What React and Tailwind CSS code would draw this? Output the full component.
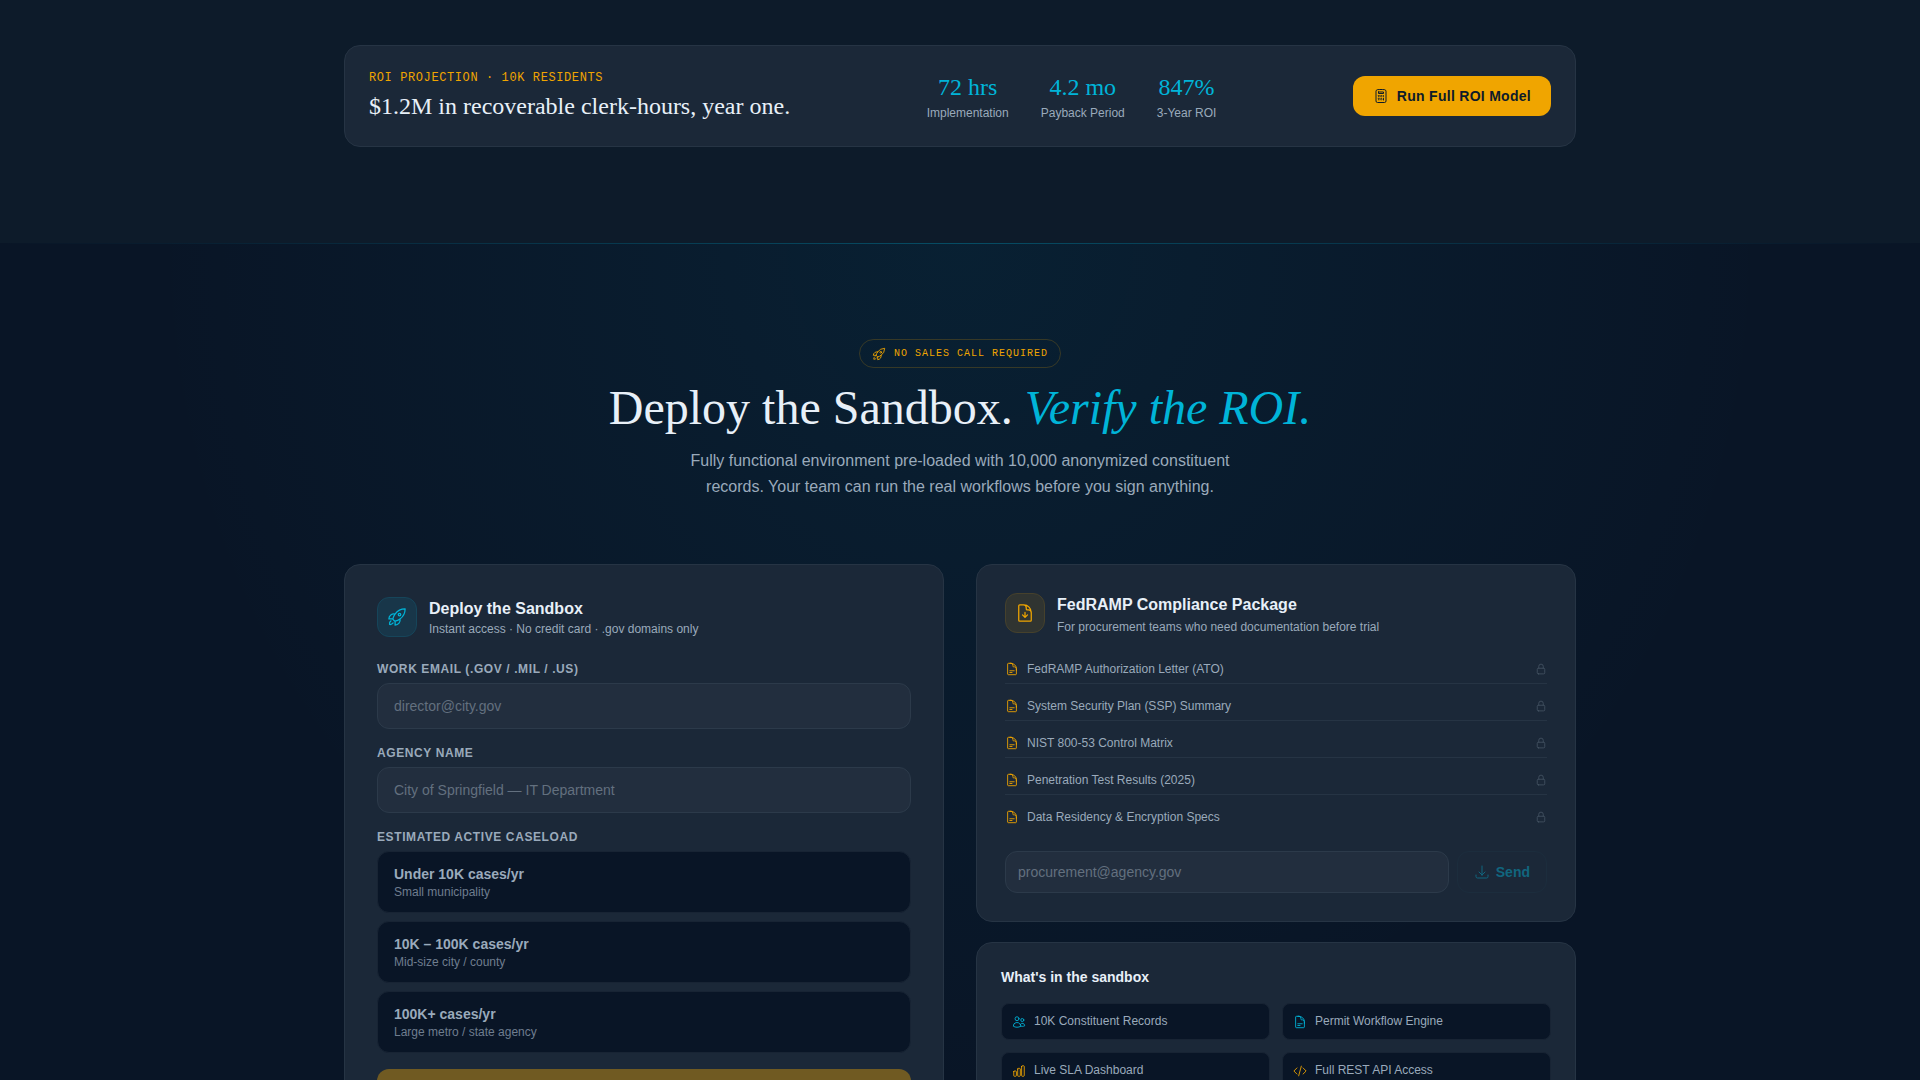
import React, { useState } from "react";
import {
  HiOutlineCalculator,
  HiOutlineRocketLaunch,
  HiOutlineDocumentArrowDown,
  HiOutlineDocumentText,
  HiOutlineLockClosed,
  HiOutlineArrowDownTray,
  HiOutlineUsers,
  HiOutlineChartBar,
  HiOutlineCodeBracket,
} from "react-icons/hi2";

const stats = [
  { value: "72 hrs", label: "Implementation" },
  { value: "4.2 mo", label: "Payback Period" },
  { value: "847%", label: "3-Year ROI" },
];

const caseloads = [
  { id: "small", title: "Under 10K cases/yr", note: "Small municipality" },
  { id: "mid", title: "10K – 100K cases/yr", note: "Mid-size city / county" },
  { id: "large", title: "100K+ cases/yr", note: "Large metro / state agency" },
];

const documents = [
  "FedRAMP Authorization Letter (ATO)",
  "System Security Plan (SSP) Summary",
  "NIST 800-53 Control Matrix",
  "Penetration Test Results (2025)",
  "Data Residency & Encryption Specs",
];

const features = [
  { label: "10K Constituent Records", icon: HiOutlineUsers, color: "text-[#00b4d8]" },
  { label: "Permit Workflow Engine", icon: HiOutlineDocumentText, color: "text-[#00b4d8]" },
  { label: "Live SLA Dashboard", icon: HiOutlineChartBar, color: "text-[#f0a500]" },
  { label: "Full REST API Access", icon: HiOutlineCodeBracket, color: "text-[#f0a500]" },
];

const RoiBanner = () => (
  <section className="bg-[#0d1b2a] pt-[45px] pb-24 px-6">
    <div className="max-w-[1232px] mx-auto flex flex-wrap items-center justify-between gap-6 p-6 rounded-2xl bg-[#1b2838] border border-[#263444]">
      <div>
        <p className="mb-1 font-['Liberation_Mono',monospace] text-xs tracking-wider uppercase text-[#f0a500]">
          ROI Projection · 10K Residents
        </p>
        <p className="font-['Liberation_Serif',serif] text-2xl text-[#e8f0f8]">
          $1.2M in recoverable clerk-hours, year one.
        </p>
      </div>

      <div className="flex gap-8">
        {stats.map((stat) => (
          <div key={stat.label} className="text-center">
            <p className="mb-0.5 font-['Liberation_Serif',serif] text-2xl text-[#00b4d8]">
              {stat.value}
            </p>
            <p className="text-xs text-[#9aaabb]">{stat.label}</p>
          </div>
        ))}
      </div>

      <button
        type="button"
        className="flex items-center gap-2 px-5 py-2.5 rounded-xl bg-[#f0a500] text-sm font-bold tracking-[0.02em] text-[#0d1b2a]">
        <HiOutlineCalculator className="w-4 h-4" />
        Run Full ROI Model
      </button>
    </div>
  </section>
);

const Field = ({ id, label, ...inputProps }) => (
  <div>
    <label
      htmlFor={id}
      className="block mb-1.5 text-xs font-bold tracking-wider uppercase text-[#9aaabb]">
      {label}
    </label>
    <input
      id={id}
      className="block w-full px-4 py-3 rounded-xl bg-[#222e3e] border border-[#2c3a4a] text-sm text-[#e8f0f8] placeholder:text-[#63707f] outline-none"
      {...inputProps}
    />
  </div>
);

const SandboxForm = () => {
  const [caseload, setCaseload] = useState(null);

  return (
    <form className="p-8 rounded-2xl bg-[#1b2838] border border-[#263444]">
      <div className="flex items-center gap-3 mb-6">
        <div className="flex items-center justify-center w-10 h-10 rounded-xl bg-[#183649] border border-[#16455a]">
          <HiOutlineRocketLaunch className="w-5 h-5 text-[#00b4d8]" />
        </div>
        <div>
          <h3 className="text-base font-bold text-[#e8f0f8]">Deploy the Sandbox</h3>
          <p className="text-xs text-[#9aaabb]">
            Instant access · No credit card · .gov domains only
          </p>
        </div>
      </div>

      <div className="space-y-4">
        <Field
          id="work-email"
          type="email"
          label="Work Email (.gov / .mil / .us)"
          placeholder="director@city.gov"
        />
        <Field
          id="agency"
          type="text"
          label="Agency Name"
          placeholder="City of Springfield — IT Department"
        />

        <div role="group" aria-labelledby="caseload-label">
          <p
            id="caseload-label"
            className="mb-1.5 text-xs font-bold tracking-wider uppercase text-[#9aaabb]">
            Estimated Active Caseload
          </p>
          <div className="space-y-2">
            {caseloads.map((item) => (
              <button
                key={item.id}
                type="button"
                aria-pressed={caseload === item.id}
                onClick={() => setCaseload(item.id)}
                className={`block w-full px-4 py-3 rounded-xl bg-[#091526] border text-left ${
                  caseload === item.id ? "border-[#00b4d8]" : "border-[#182434]"
                }`}>
                <span className="block text-sm font-bold text-[#9aaabb]">{item.title}</span>
                <span className="block text-xs text-[#6f7d8f]">{item.note}</span>
              </button>
            ))}
          </div>
        </div>

        <button
          type="submit"
          disabled
          aria-label="Deploy"
          className="flex items-center justify-center w-full py-4 rounded-xl bg-[#705a22] text-[#14202b]">
          <HiOutlineRocketLaunch className="w-5 h-5" />
        </button>
      </div>
    </form>
  );
};

const CompliancePackage = () => (
  <div className="p-7 rounded-2xl bg-[#1b2838] border border-[#263444]">
    <div className="flex items-start gap-3 mb-5">
      <div className="flex items-center justify-center w-10 h-10 rounded-xl bg-[#303431] border border-[#46412c]">
        <HiOutlineDocumentArrowDown className="w-5 h-5 text-[#f0a500]" />
      </div>
      <div>
        <h3 className="mb-0.5 text-base font-bold text-[#e8f0f8]">
          FedRAMP Compliance Package
        </h3>
        <p className="text-xs text-[#9aaabb]">
          For procurement teams who need documentation before trial
        </p>
      </div>
    </div>

    <ul className="mb-5 space-y-2">
      {documents.map((doc) => (
        <li
          key={doc}
          className="flex items-center gap-2 py-1.5 border-b border-[#263444] last:border-b-0 text-xs text-[#9aaabb]">
          <HiOutlineDocumentText className="w-3.5 h-3.5 text-[#f0a500]" />
          <span className="flex-1">{doc}</span>
          <HiOutlineLockClosed className="w-3 h-3 text-[#4a5868]" />
        </li>
      ))}
    </ul>

    <form className="flex gap-2">
      <input
        type="email"
        aria-label="Procurement email"
        placeholder="procurement@agency.gov"
        className="flex-1 min-w-0 px-3 py-2.5 rounded-xl bg-[#222e3e] border border-[#2c3a4a] text-sm text-[#e8f0f8] placeholder:text-[#63707f] outline-none"
      />
      <button
        type="submit"
        disabled
        className="flex items-center gap-1.5 px-4 py-2.5 rounded-xl border border-[#1c2d3d] text-sm font-bold text-[#11667f]">
        <HiOutlineArrowDownTray className="w-4 h-4" />
        Send
      </button>
    </form>
  </div>
);

const SandboxContents = () => (
  <div className="p-6 rounded-2xl bg-[#1b2838] border border-[#263444]">
    <h3 className="mb-4 text-sm font-bold text-[#e8f0f8]">What's in the sandbox</h3>
    <ul className="grid grid-cols-2 gap-3">
      {features.map(({ label, icon: Icon, color }) => (
        <li
          key={label}
          className="flex items-center gap-2 px-2.5 py-2 rounded-lg bg-[#091526] border border-[#182434] text-xs leading-[19px] text-[#9aaabb]">
          <Icon className={`w-3.5 h-3.5 ${color}`} />
          {label}
        </li>
      ))}
    </ul>
  </div>
);

const App = () => {
  return (
    <div className="min-h-screen bg-[#091526] font-['Liberation_Sans',Arial,sans-serif]">
      <RoiBanner />

      <section className="bg-[radial-gradient(ellipse_at_50%_0%,rgba(0,180,216,0.07)_0%,transparent_60%)]">
        <div className="h-px -mb-px bg-gradient-to-r from-transparent via-[#00b4d8]/30 to-transparent" />
        <div className="max-w-[1280px] mx-auto px-6 py-24">
          <div className="flex flex-col items-center mb-16 text-center">
            <p className="flex items-center gap-2 px-3 py-1.5 mb-4 rounded-full border border-[#f0a500]/20 font-['Liberation_Mono',monospace] text-[10px] leading-[15px] tracking-widest uppercase text-[#f0a500]">
              <HiOutlineRocketLaunch className="w-3.5 h-3.5" />
              No Sales Call Required
            </p>
            <h2 className="mb-4 font-['Liberation_Serif',serif] text-5xl leading-none text-[#e8f0f8]">
              Deploy the Sandbox. <em className="text-[#00b4d8]">Verify the ROI.</em>
            </h2>
            <p className="max-w-xl text-base leading-[26px] text-[#9aaabb]">
              Fully functional environment pre-loaded with 10,000 anonymized constituent
              records. Your team can run the real workflows before you sign anything.
            </p>
          </div>

          <div className="grid grid-cols-1 lg:grid-cols-2 items-start gap-8">
            <SandboxForm />
            <div className="space-y-5">
              <CompliancePackage />
              <SandboxContents />
            </div>
          </div>
        </div>
      </section>
    </div>
  );
};

export default App;
